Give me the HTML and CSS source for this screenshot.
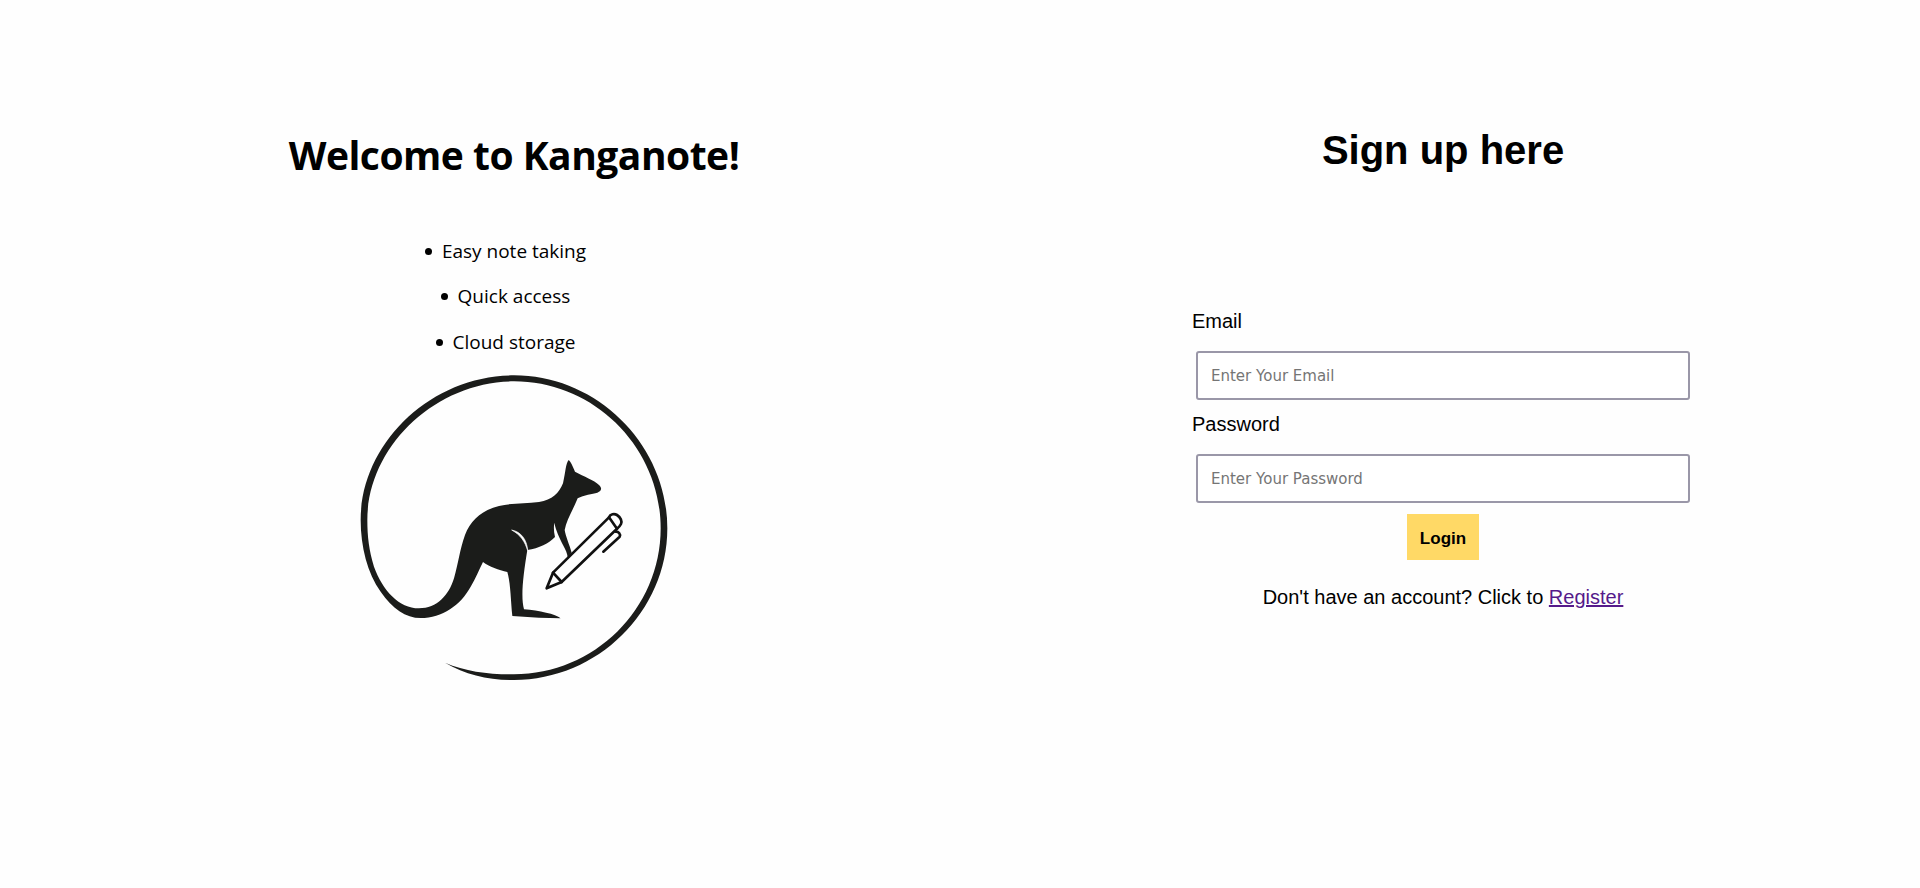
FILE: index.html
```html
<!DOCTYPE html>
<html lang="en">
<head>
    <meta charset="UTF-8">
    <meta name="viewport" content="width=device-width, initial-scale=1.0">
    <title>Kanganote</title>
    <link rel="stylesheet" href="styles.css">
</head>
<body>
    <div class="container">
        <!-- Welcome column -->
        <div class="welcome">
            <h1>Welcome to Kanganote!</h1>
            <ul class="features">
                <li>Easy note taking</li>
                <li>Quick access</li>
                <li>Cloud storage</li>
            </ul>
            <svg class="logo" viewBox="15 0 1020 990" role="img" aria-label="Kanganote logo">
                <path class="logo-fill" d="M318 908 C380 945 450 960 525 960 C775 960 985 755 985 505 C985 255 775 46 525 46 C275 46 65 250 65 480 C65 560 85 640 125 695 C160 745 200 774 245 774 C310 774 365 735 395 680 C410 655 420 630 432 606 C450 620 480 630 505 636 C515 670 515 720 520 768 L600 773 L665 775 C650 762 600 752 555 748 C545 710 552 650 565 570 C600 565 630 550 648 531 C644 515 644 500 646 488 C650 510 662 535 672 555 C680 570 685 580 686 592 L698 578 C692 555 680 530 677 510 C682 480 702 450 716 415 C735 405 760 402 775 398 C788 393 790 385 780 375 C765 360 735 350 708 335 C702 320 695 305 689 300 C680 310 680 335 672 370 C660 400 640 420 600 426 C560 432 520 428 480 438 C430 450 395 480 378 525 C362 570 358 610 345 655 C330 705 295 745 240 745 C180 745 130 690 105 620 C90 570 85 530 85 480 C85 260 290 64 525 64 C765 64 965 262 965 505 C965 748 765 943 525 943 C450 943 380 935 318 908 Z"/>
                <path class="logo-cut" d="M518 510 C545 515 564 538 566 572 C558 545 545 525 518 510 Z"/>
                <g class="logo-pen">
                    <path d="M623 685 L642 638 L810 472 L834 506 L668 666 Z"/>
                    <path d="M642 638 L668 666"/>
                    <path d="M810 472 C814 462 826 460 834 465 C845 472 850 484 846 492 C843 498 838 503 834 506"/>
                    <path d="M830 515 C838 514 846 522 842 530 L793 575"/>
                </g>
            </svg>
        </div>

        <!-- Login column -->
        <div class="signup">
            <h2>Sign up here</h2>
            <form class="login-form">
                <label for="email">Email</label>
                <input type="email" id="email" name="email" placeholder="Enter Your Email">
                <label for="password">Password</label>
                <input type="password" id="password" name="password" placeholder="Enter Your Password">
                <button type="button">Login</button>
            </form>
            <p class="register">Don't have an account? Click to <a href="#">Register</a></p>
        </div>
    </div>
</body>
</html>
```

FILE: styles.css
```css
body {
    margin: 0;
    background-color: #fefefe;
    color: #000000;
    font-family: 'Liberation Sans', Arial, sans-serif;
}
.container {
    display: flex;
    height: 888px;
    overflow: hidden;
}
.welcome {
    width: 1028px;
    display: flex;
    flex-direction: column;
    align-items: center;
    font-family: 'Open Sans', sans-serif;
}
h1 {
    font-size: 39px;
    font-weight: 700;
    letter-spacing: -0.5px;
    line-height: 54px;
    margin: 128px 0 0 0;
}
.features {
    list-style: none;
    padding: 0;
    margin: 55.75px 0 0 0;
    font-size: 19px;
}
.features li {
    position: relative;
    width: fit-content;
    line-height: 26px;
    margin: 0 auto 19.5px auto;
}
/* bullet sits right next to each centered line */
.features li::before {
    content: "";
    position: absolute;
    left: -17px;
    top: 10px;
    width: 7px;
    height: 7px;
    border-radius: 50%;
    background: #000000;
}
.logo {
    width: 340px;
    height: 330px;
    margin-top: -14.75px;
}
.logo-fill {
    fill: #1b1c1a;
}
.logo-cut {
    fill: #fefefe;
    stroke: #fefefe;
    stroke-width: 2;
}
.logo-pen {
    fill: none;
    stroke: #111111;
    stroke-width: 8;
    stroke-linejoin: round;
    stroke-linecap: round;
}
.signup {
    margin-left: 164px;
    width: 502px;
}
h2 {
    font-size: 40px;
    font-weight: 700;
    line-height: 46px;
    text-align: center;
    margin: 127px 0 0 0;
}
.login-form {
    display: flex;
    flex-direction: column;
    margin-top: 137px;
}
label {
    font-size: 20px;
    line-height: 23px;
}
input {
    height: 49px;
    box-sizing: border-box;
    margin: 18px 4px 10px 4px;
    padding: 0 13px;
    border: 2px solid #9a97a8;
    border-radius: 3px;
    background: #ffffff;
    font-family: 'DejaVu Sans', sans-serif;
    font-size: 15px;
}
input + label {
    margin-top: 3px;
}
input::placeholder {
    color: #757575;
}
button {
    align-self: center;
    width: 72px;
    height: 46px;
    margin-top: 1px;
    padding: 4px 0 0 0;
    border: none;
    background: #ffd966;
    color: #000000;
    font-family: 'Liberation Sans', Arial, sans-serif;
    font-size: 17px;
    font-weight: 700;
}
.register {
    font-size: 20px;
    line-height: 23px;
    text-align: center;
    margin: 26px 0 0 0;
}
.register a {
    color: #551a8b;
}
```
